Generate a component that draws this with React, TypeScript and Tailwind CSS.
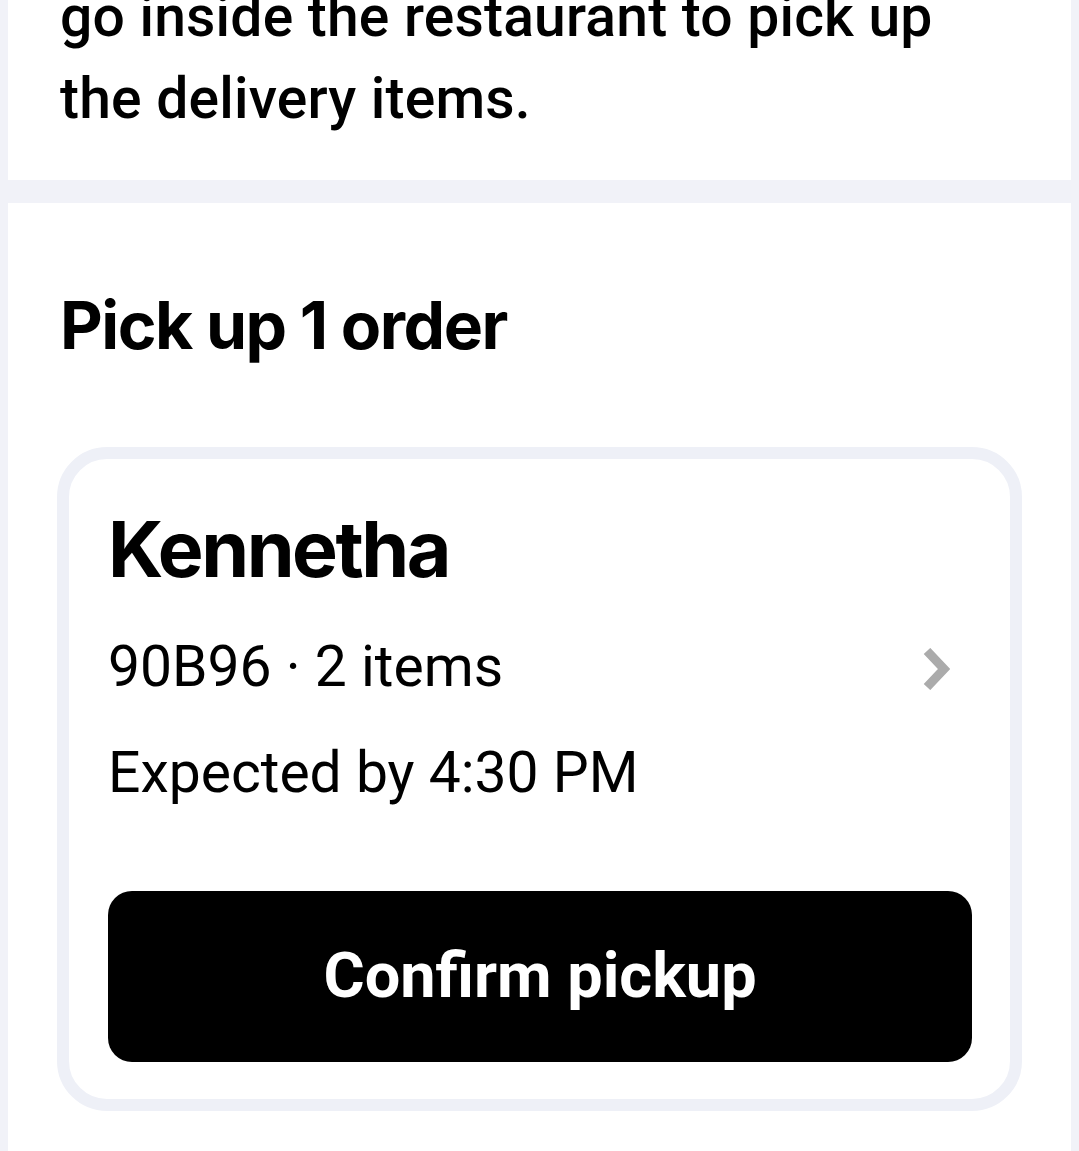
import React from "react";

export default function App() {
  return (
    <div className="min-h-screen w-full overflow-hidden bg-[#f1f2f8] px-[8px]">
      <div className="h-[180px] overflow-hidden bg-white pl-[52px]">
        <p className="mt-[-24px] font-['Roboto','Liberation_Sans',sans-serif] text-[57px] font-medium leading-[82px] tracking-[0.2px] text-black">
          go inside the restaurant to pick up
          <br />
          the delivery items.
        </p>
      </div>
      <div className="mt-[23px] min-h-[960px] bg-white pb-[60px] pt-[89px]">
        <h2 className="pl-[52px] font-['Inter','Liberation_Sans',sans-serif] text-[66px] font-bold leading-none tracking-[-1.5px] text-black">
          Pick up 1 order
        </h2>
        <div className="ml-[49px] mt-[89px] w-[965px] rounded-[50px] border-[12px] border-[#eef0f7] bg-white pb-[37px] pl-[39px] pr-[38px] pt-[52px]">
          <div className="font-['Inter','Liberation_Sans',sans-serif] text-[77px] font-bold leading-none tracking-[-2.5px] text-black">
            Kennetha
          </div>
          <div className="mt-[50px] flex items-center justify-between font-['Roboto','Liberation_Sans',sans-serif] text-[57px] leading-none text-black">
            <span>90B96 · 2 items</span>
            <svg width="28" height="42" viewBox="0 0 28 42" className="mr-[22px] mt-[4px]">
              <path d="M5 3 L22 21 L5 39" fill="none" stroke="#ababab" strokeWidth="9" strokeLinejoin="miter" />
            </svg>
          </div>
          <div className="mt-[49px] font-['Roboto','Liberation_Sans',sans-serif] text-[57px] leading-none text-black">
            Expected by 4:30 PM
          </div>
          <button className="mt-[90px] flex h-[171px] w-full items-center justify-center rounded-[24px] bg-black font-['Roboto','Liberation_Sans',sans-serif] text-[63px] font-bold text-white">
            Confirm pickup
          </button>
        </div>
      </div>
    </div>
  );
}
